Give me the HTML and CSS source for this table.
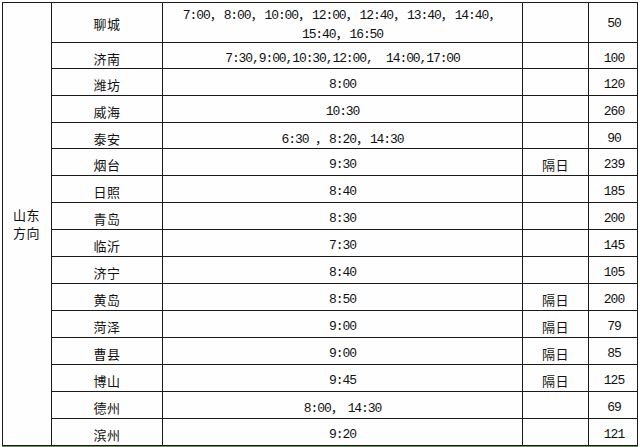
FILE: index.html
```html
<!DOCTYPE html>
<html lang="zh-CN">
<head>
<meta charset="utf-8">
<title>山东方向</title>
<link rel="stylesheet" href="styles.css">
</head>
<body>
<div class="sheet">
  <div class="grid">
    <div class="cell region">山东<br>方向</div>

    <div class="cell city top">聊城</div>
    <div class="cell times first"><span class="line">7:00<span class="fw">，</span>8:00<span class="fw">，</span>10:00<span class="fw">，</span>12:00<span class="fw">，</span>12:40<span class="fw">，</span>13:40<span class="fw">，</span>14:40<span class="fw">，</span><br>15:40<span class="fw">，</span>16:50</span></div>
    <div class="cell note top"></div>
    <div class="cell num top">50</div>

    <div class="cell city">济南</div>
    <div class="cell times"><span class="line">7:30,9:00,10:30,12:00,  14:00,17:00</span></div>
    <div class="cell note"></div>
    <div class="cell num">100</div>

    <div class="cell city">潍坊</div>
    <div class="cell times"><span class="line">8:00</span></div>
    <div class="cell note"></div>
    <div class="cell num">120</div>

    <div class="cell city">威海</div>
    <div class="cell times"><span class="line">10:30</span></div>
    <div class="cell note"></div>
    <div class="cell num">260</div>

    <div class="cell city">泰安</div>
    <div class="cell times"><span class="line">6:30 <span class="fw">，</span>8:20<span class="fw">，</span>14:30</span></div>
    <div class="cell note"></div>
    <div class="cell num">90</div>

    <div class="cell city">烟台</div>
    <div class="cell times"><span class="line">9:30</span></div>
    <div class="cell note">隔日</div>
    <div class="cell num">239</div>

    <div class="cell city">日照</div>
    <div class="cell times"><span class="line">8:40</span></div>
    <div class="cell note"></div>
    <div class="cell num">185</div>

    <div class="cell city">青岛</div>
    <div class="cell times"><span class="line">8:30</span></div>
    <div class="cell note"></div>
    <div class="cell num">200</div>

    <div class="cell city">临沂</div>
    <div class="cell times"><span class="line">7:30</span></div>
    <div class="cell note"></div>
    <div class="cell num">145</div>

    <div class="cell city">济宁</div>
    <div class="cell times"><span class="line">8:40</span></div>
    <div class="cell note"></div>
    <div class="cell num">105</div>

    <div class="cell city">黄岛</div>
    <div class="cell times"><span class="line">8:50</span></div>
    <div class="cell note">隔日</div>
    <div class="cell num">200</div>

    <div class="cell city">菏泽</div>
    <div class="cell times"><span class="line">9:00</span></div>
    <div class="cell note">隔日</div>
    <div class="cell num">79</div>

    <div class="cell city">曹县</div>
    <div class="cell times"><span class="line">9:00</span></div>
    <div class="cell note">隔日</div>
    <div class="cell num">85</div>

    <div class="cell city">博山</div>
    <div class="cell times"><span class="line">9:45</span></div>
    <div class="cell note">隔日</div>
    <div class="cell num">125</div>

    <div class="cell city">德州</div>
    <div class="cell times"><span class="line">8:00<span class="fw wide">，</span>14:30</span></div>
    <div class="cell note"></div>
    <div class="cell num">69</div>

    <div class="cell city">滨州</div>
    <div class="cell times"><span class="line">9:20</span></div>
    <div class="cell note"></div>
    <div class="cell num">121</div>
  </div>
  <div class="baseline"></div>
</div>
</body>
</html>
```
FILE: styles.css
```css
html, body {
  margin: 0;
  padding: 0;
  background: #ffffff;
}

body {
  width: 640px;
  height: 447px;
  overflow: hidden;
  color: #111111;
  font-family: "Noto Sans CJK SC", "Liberation Sans", sans-serif;
}

.sheet {
  padding: 2px 0 0 2px;
  width: 636px;
}

.grid {
  display: grid;
  grid-template-columns: 48px 110px 359px 65px 48px;
  grid-template-rows: 39px 25px 26px 26px 25px repeat(11, 26px);
  gap: 1px;
  padding: 1px;
  background: #1a1a1a;
}

.cell {
  background: #fefefe;
  display: flex;
  align-items: center;
  justify-content: center;
  text-align: center;
  padding-top: 5px;
  box-sizing: border-box;
}

.cell.top {
  padding-top: 2px;
}

.region {
  grid-column: 1;
  grid-row: 1 / span 16;
  font-size: 13px;
  line-height: 18px;
  letter-spacing: 0.5px;
  padding-top: 0;
  padding-right: 1px;
}

.city {
  grid-column: 2;
  font-size: 13px;
  letter-spacing: 0.5px;
}

.times {
  grid-column: 3;
  font-family: "Liberation Mono", "Noto Sans CJK SC", monospace;
  font-size: 13px;
  letter-spacing: -1.1px;
  line-height: 17px;
  white-space: pre;
}

.times.first {
  padding-top: 3px;
}

.line {
  display: block;
}

.fw {
  font-family: "Noto Sans CJK SC", sans-serif;
  letter-spacing: 1px;
}

.fw.wide {
  letter-spacing: 4px;
}

.note {
  grid-column: 4;
  font-size: 13px;
  letter-spacing: 0.5px;
}

.num {
  grid-column: 5;
  font-family: "Liberation Mono", monospace;
  font-size: 13px;
  letter-spacing: -1px;
  padding-left: 2px;
}

.baseline {
  height: 1px;
  background: #6f8c62;
}
```
